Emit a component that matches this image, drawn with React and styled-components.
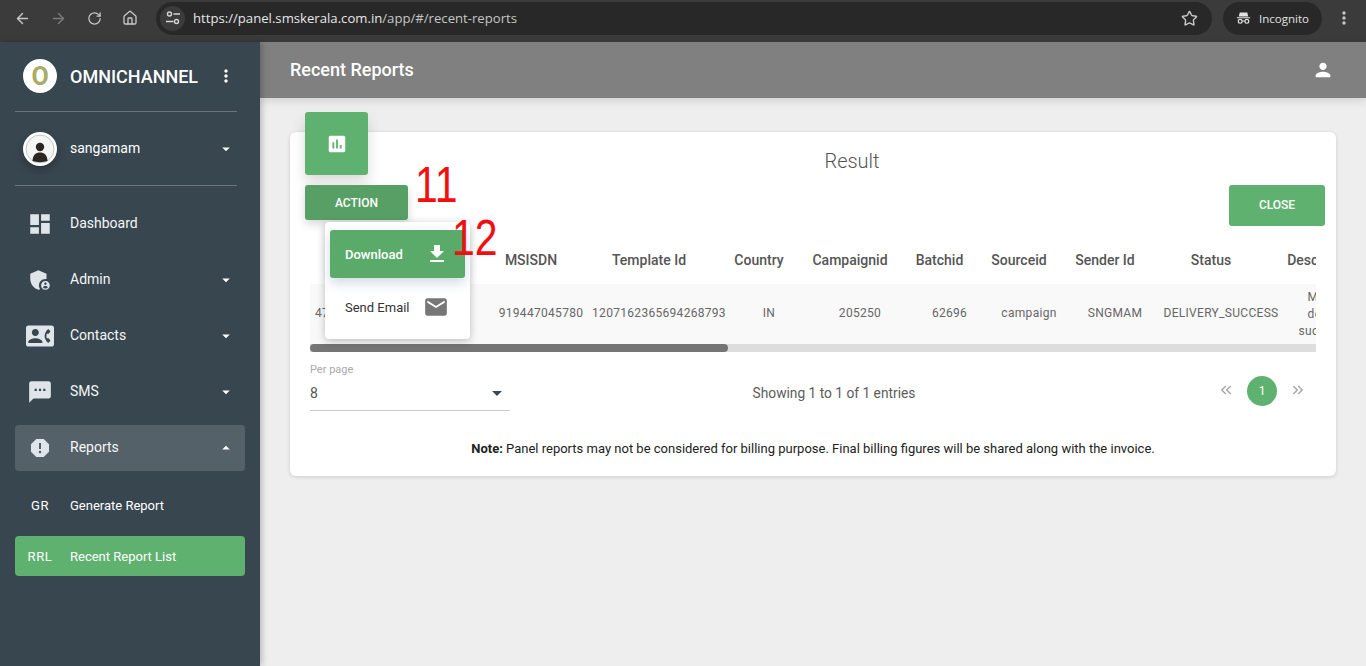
import React from "react";
import styled, { createGlobalStyle } from "styled-components";
import { ArrowLeft, ArrowRight, RotateCw, Home, Star } from "lucide-react";
import {
  MdDashboard, MdAdminPanelSettings, MdContactPhone, MdSms, MdReport,
  MdGetApp, MdEmail, MdPerson, MdAssessment, MdArrowDropDown, MdArrowDropUp,
  MdMoreVert, MdKeyboardDoubleArrowLeft, MdKeyboardDoubleArrowRight,
} from "react-icons/md";

const Global = createGlobalStyle`
  html, body { margin: 0; padding: 0; height: 100%; overflow: hidden; background: #eee; }
  body { font-family: Roboto, "Liberation Sans", sans-serif; }
  * { box-sizing: border-box; }
`;

const Page = styled.div`
  position: relative;
  display: flex;
  flex-direction: column;
  width: 1366px;
  height: 666px;
  overflow: hidden;
`;

/* browser chrome */
const Chrome = styled.div`
  flex: 0 0 42px;
  display: flex;
  align-items: center;
  height: 42px;
  padding: 0 0 6px 0;
  background: #3b3b3b;
  color: #c7c7c7;
`;
const NavIcon = styled.span`
  display: flex;
  justify-content: center;
  width: 36px;
  color: ${(p) => (p.$dim ? "#7a7a7a" : "#c7c7c7")};
`;
const NavIcons = styled.div`
  display: flex;
  align-items: center;
  padding-left: 4px;
  width: 156px;
`;
const Omnibox = styled.div`
  display: flex;
  align-items: center;
  width: 1056px;
  height: 33px;
  padding: 0 14px 0 4px;
  border-radius: 17px;
  background: #282828;
`;
const SiteIcon = styled.span`
  display: flex;
  align-items: center;
  justify-content: center;
  width: 25px;
  height: 25px;
  border-radius: 50%;
  background: #3b3b3b;
`;
const Url = styled.span`
  flex: 1;
  margin-left: 8px;
  font-family: "Open Sans", sans-serif;
  font-size: 13.15px;
  color: #c4c7c5;
  b { font-weight: 400; color: #e6e6e6; }
`;
const IncognitoPill = styled.div`
  display: flex;
  align-items: center;
  gap: 8px;
  width: 99px;
  height: 33px;
  margin-left: 11px;
  padding-left: 13px;
  border-radius: 17px;
  background: #282828;
  font-family: "Open Sans", sans-serif;
  font-size: 11.5px;
  color: #e3e3e3;
`;
const ChromeMenu = styled.span`
  display: flex;
  justify-content: center;
  width: 44px;
`;

const Body = styled.div`
  flex: 1;
  display: flex;
  min-height: 0;
`;

/* sidebar */
const Sidebar = styled.aside`
  flex: 0 0 260px;
  display: flex;
  flex-direction: column;
  background: #37464f;
  color: #fff;
  box-shadow: 2px 0 6px rgba(0, 0, 0, 0.22);
  z-index: 3;
`;
const Brand = styled.div`
  display: flex;
  align-items: center;
  margin: 0 23px 0 15px;
  padding: 17px 0 18px 8px;
  border-bottom: 1px solid rgba(255, 255, 255, 0.25);
  box-sizing: content-box;
  height: 34px;
`;
const LogoCircle = styled.div`
  display: flex;
  align-items: center;
  justify-content: center;
  width: 34px;
  height: 34px;
  border-radius: 50%;
  background: #fff;
  color: #a9ac63;
  font-size: 25px;
  font-weight: 700;
`;
const BrandName = styled.span`
  margin-left: 13px;
  width: 146px;
  font-size: 18px;
  font-weight: 500;
`;
const UserRow = styled.div`
  display: flex;
  align-items: center;
  margin: 0 23px 0 15px;
  padding: 20px 0 19px 8px;
  border-bottom: 1px solid rgba(255, 255, 255, 0.25);
  box-sizing: content-box;
  height: 34px;
`;
const Avatar = styled.div`
  width: 34px;
  height: 34px;
  border-radius: 50%;
  background: #fff;
  box-shadow: 0 4px 8px rgba(0, 0, 0, 0.25);
  overflow: hidden;
`;
const UserName = styled.span`
  flex: 1;
  margin-left: 13px;
  margin-top: -3px;
  font-size: 14px;
`;
const UserCaret = styled.span`
  display: flex;
  width: 18px;
  margin-right: 2px;
  color: #fff;
`;
const Nav = styled.nav`
  display: flex;
  flex-direction: column;
  gap: 10px;
  padding: 15px 15px 0;
`;
const NavItem = styled.div`
  display: flex;
  align-items: center;
  height: 46px;
  border-radius: 4px;
  background: ${(p) => (p.$open ? "rgba(255,255,255,0.15)" : "transparent")};
`;
const NavGlyph = styled.span`
  display: flex;
  align-items: center;
  justify-content: center;
  flex: 0 0 50px;
  color: #dfe5e9;
`;
const NavLabel = styled.span`
  flex: 1;
  margin: -2px 0 0 5px;
  font-size: 14px;
  color: #f4f6f7;
`;
const Caret = styled.span`
  display: flex;
  width: 18px;
  margin-right: 10px;
  color: #fff;
`;
const SubNav = styled.div`
  display: flex;
  flex-direction: column;
  gap: 11px;
  margin-top: 4px;
`;
const SubItem = styled.div`
  display: flex;
  align-items: center;
  height: 40px;
  border-radius: 4px;
  font-size: 13px;
  color: #fff;
  background: ${(p) => (p.$active ? "#5fb170" : "transparent")};
`;
const SubCode = styled.span`
  flex: 0 0 50px;
  text-align: center;
  letter-spacing: 0.6px;
`;
const SubLabel = styled.span`
  margin-left: 5px;
`;

/* main */
const Main = styled.main`
  flex: 1;
  display: flex;
  flex-direction: column;
  min-width: 0;
`;
const TopBar = styled.header`
  display: flex;
  align-items: center;
  justify-content: space-between;
  height: 56px;
  padding: 0 32px 0 30px;
  background: #808080;
  box-shadow: 0 3px 8px rgba(0, 0, 0, 0.12);
  color: #fff;
  font-size: 18px;
  font-weight: 500;
  z-index: 2;
`;
const TopTitle = styled.div`
  margin-top: -1px;
`;
const Content = styled.div`
  flex: 1;
  padding: 34px 30px 0;
  background: #eee;
`;
const Card = styled.section`
  position: relative;
  height: 344px;
  padding-top: 15px;
  background: #fff;
  border-radius: 6px;
  box-shadow: 0 1px 4px rgba(0, 0, 0, 0.14);
`;
const CardBadge = styled.div`
  position: absolute;
  left: 15px;
  top: -20px;
  display: flex;
  align-items: center;
  justify-content: center;
  width: 63px;
  height: 63px;
  border-radius: 3px;
  background: #5fb170;
  color: #fff;
  box-shadow: 0 8px 14px rgba(0, 0, 0, 0.14);
`;
const CardTitle = styled.h2`
  margin: 0;
  height: 28px;
  padding-left: 78px;
  line-height: 28px;
  text-align: center;
  font-size: 20px;
  font-weight: 300;
  color: #555;
`;
const Toolbar = styled.div`
  display: flex;
  align-items: flex-start;
  justify-content: space-between;
  height: 41px;
  margin: 10px 11px 0 15px;
`;
const ActionWrap = styled.div`
  position: relative;
`;
const ActionButton = styled.button`
  display: block;
  width: 103px;
  height: 35px;
  border: 0;
  border-radius: 3px;
  background: #579f65;
  color: #fff;
  font: 500 12px Roboto, sans-serif;
  box-shadow: 0 4px 10px rgba(0, 0, 0, 0.16);
`;
const CloseButton = styled.button`
  width: 96px;
  height: 41px;
  padding: 0 0 2px;
  border: 0;
  border-radius: 3px;
  background: #5fb170;
  color: #fff;
  font: 500 12px Roboto, sans-serif;
`;
const Menu = styled.div`
  position: absolute;
  left: 20px;
  top: 37px;
  display: flex;
  flex-direction: column;
  gap: 5px;
  width: 145px;
  height: 117px;
  padding: 8px 5px;
  border-radius: 4px;
  background: #fff;
  box-shadow: 0 2px 8px rgba(0, 0, 0, 0.25);
  z-index: 5;
`;
const MenuItem = styled.div`
  flex: 0 0 48px;
  display: flex;
  align-items: center;
  justify-content: space-between;
  padding: 0 15px;
  border-radius: 3px;
  font-size: 13px;
  font-weight: ${(p) => (p.$active ? 500 : 400)};
  color: ${(p) => (p.$active ? "#fff" : "#333")};
  background: ${(p) => (p.$active ? "#5aab6a" : "transparent")};
  box-shadow: ${(p) => (p.$active ? "0 5px 12px rgba(80,110,160,0.25)" : "none")};
  svg { color: ${(p) => (p.$active ? "#fff" : "#777")}; margin-right: 1px; }
`;
const TableWrap = styled.div`
  margin: 12px 20px 0;
  overflow: hidden;
`;
const Table = styled.table`
  width: 1072.5px;
  table-layout: fixed;
  border-collapse: collapse;
`;
const Th = styled.th`
  height: 46px;
  padding: 0 20px 2px 0;
  font-size: 14px;
  font-weight: 500;
  text-align: center;
  white-space: nowrap;
  color: #555;
`;
const Td = styled.td`
  height: 60px;
  padding: ${(p) => (p.$first ? "0 0 2px 5px" : p.$wrap ? "0 15px" : "0 0 2px")};
  font-size: 12px;
  letter-spacing: 0.3px;
  line-height: 17px;
  text-align: ${(p) => (p.$first ? "left" : "center")};
  white-space: ${(p) => (p.$wrap ? "normal" : "nowrap")};
  color: #666;
  background: #f9f9f9;
`;
const Track = styled.div`
  height: 8px;
  margin: 0 20px;
  background: #ddd;
`;
const Thumb = styled.div`
  width: 418px;
  height: 8px;
  border-radius: 4px;
  background: #757575;
`;
const Footer = styled.div`
  display: grid;
  grid-template-columns: 200px 1fr 158px;
  margin: 10px 20px 0;
  height: 49px;
`;
const PerPage = styled.div`
  display: flex;
  flex-direction: column;
  border-bottom: 1px solid #ccc;
`;
const PerLabel = styled.span`
  padding-top: 1px;
  font-size: 11px;
  line-height: 14px;
  color: #aaa;
`;
const PerValue = styled.div`
  display: flex;
  align-items: center;
  justify-content: space-between;
  height: 33px;
  padding-bottom: 1px;
  font-size: 14px;
  color: #555;
  svg { color: #3c4850; margin-right: 1px; }
`;
const Showing = styled.div`
  padding-top: 22px;
  text-align: center;
  font-size: 13.75px;
  line-height: 18px;
  color: #5c5c5c;
`;
const Pager = styled.div`
  display: flex;
  align-items: flex-start;
  justify-content: flex-end;
  gap: 12px;
  padding: 14px 9px 0 0;
  color: #aaa;
`;
const PagerArrow = styled.span`
  display: flex;
  margin-top: 5px;
`;
const PageDot = styled.span`
  display: flex;
  align-items: center;
  justify-content: center;
  width: 30px;
  height: 30px;
  border-radius: 50%;
  background: #5fb170;
  color: #fff;
  font-size: 12px;
`;
const Note = styled.p`
  margin: 29px 0 0;
  text-align: center;
  font-size: 13px;
  line-height: 18px;
  color: #222;
`;
const Mark = styled.span`
  position: absolute;
  left: ${(p) => p.$x}px;
  top: ${(p) => p.$y}px;
  font-family: "Liberation Sans", Arial, sans-serif;
  font-size: 50px;
  line-height: 50px;
  color: #f01010;
  transform: scaleX(0.82);
  transform-origin: left top;
  z-index: 9;
`;

const cols = [184.5, 93, 143, 77, 105, 74, 85, 87, 125, 99];
const heads = ["", "MSISDN", "Template Id", "Country", "Campaignid", "Batchid", "Sourceid", "Sender Id", "Status", "Description"];
const cells = ["47", "919447045780", "1207162365694268793", "IN", "205250", "62696", "campaign", "SNGMAM", "DELIVERY_SUCCESS", "Message delivered successfully"];

const Tune = () => (
  <svg width="16" height="16" viewBox="0 0 16 16" fill="none" stroke="#d5d5d5" strokeWidth="1.4">
    <circle cx="4.5" cy="4" r="2" />
    <path d="M8.5 4H15M1 11.5h7.5" />
    <circle cx="11.5" cy="11.5" r="2" />
  </svg>
);
const Incognito = () => (
  <svg width="15" height="14" viewBox="0 0 18 16" fill="none">
    <path d="M4.5 1.5h9l1.2 4.7H3.3z M1 7h16v1.3H1z" fill="#e3e3e3" />
    <circle cx="5" cy="12" r="2.3" stroke="#e3e3e3" strokeWidth="1.4" />
    <circle cx="13" cy="12" r="2.3" stroke="#e3e3e3" strokeWidth="1.4" />
    <path d="M7.3 11.6h3.4" stroke="#e3e3e3" strokeWidth="1.2" />
  </svg>
);
const UserPic = () => (
  <svg width="34" height="34" viewBox="0 0 34 34">
    <circle cx="17" cy="17" r="14" fill="#f4f4f4" stroke="#bbb" strokeWidth="0.8" />
    <circle cx="17" cy="15" r="4.2" fill="#2a2723" />
    <path d="M9.5 29c0-6 3.5-8.5 7.5-8.5s7.5 2.5 7.5 8.5c-4 1.5-11 1.5-15 0z" fill="#2a2723" />
  </svg>
);

const navs = [
  [MdDashboard, "Dashboard", false, 26],
  [MdAdminPanelSettings, "Admin", true, 26],
  [MdContactPhone, "Contacts", true, 28],
  [MdSms, "SMS", true, 26],
];

export default function App() {
  return (
    <Page>
      <Global />
      <Chrome>
        <NavIcons>
          <NavIcon><ArrowLeft size={17} /></NavIcon>
          <NavIcon $dim><ArrowRight size={17} /></NavIcon>
          <NavIcon><RotateCw size={15} /></NavIcon>
          <NavIcon><Home size={16} /></NavIcon>
        </NavIcons>
        <Omnibox>
          <SiteIcon><Tune /></SiteIcon>
          <Url><b>https://panel.smskerala.com.in</b>/app/#/recent-reports</Url>
          <Star size={17} />
        </Omnibox>
        <IncognitoPill><Incognito />Incognito</IncognitoPill>
        <ChromeMenu><MdMoreVert size={20} /></ChromeMenu>
      </Chrome>
      <Body>
        <Sidebar>
          <Brand>
            <LogoCircle>O</LogoCircle>
            <BrandName>OMNICHANNEL</BrandName>
            <MdMoreVert size={20} />
          </Brand>
          <UserRow>
            <Avatar><UserPic /></Avatar>
            <UserName>sangamam</UserName>
            <UserCaret><MdArrowDropDown size={20} /></UserCaret>
          </UserRow>
          <Nav>
            {navs.map(([Icon, label, caret, size]) => (
              <NavItem key={label}>
                <NavGlyph><Icon size={size} /></NavGlyph>
                <NavLabel>{label}</NavLabel>
                {caret && <Caret><MdArrowDropDown size={20} /></Caret>}
              </NavItem>
            ))}
            <NavItem $open>
              <NavGlyph><MdReport size={24} /></NavGlyph>
              <NavLabel>Reports</NavLabel>
              <Caret><MdArrowDropUp size={20} /></Caret>
            </NavItem>
            <SubNav>
              <SubItem><SubCode>GR</SubCode><SubLabel>Generate Report</SubLabel></SubItem>
              <SubItem $active><SubCode>RRL</SubCode><SubLabel>Recent Report List</SubLabel></SubItem>
            </SubNav>
          </Nav>
        </Sidebar>
        <Main>
          <TopBar>
            <TopTitle>Recent Reports</TopTitle>
            <MdPerson size={22} />
          </TopBar>
          <Content>
            <Card>
              <CardBadge><MdAssessment size={22} /></CardBadge>
              <CardTitle>Result</CardTitle>
              <Toolbar>
                <ActionWrap>
                  <ActionButton>ACTION</ActionButton>
                  <Menu>
                    <MenuItem $active>Download<MdGetApp size={24} /></MenuItem>
                    <MenuItem>Send Email<MdEmail size={26} /></MenuItem>
                  </Menu>
                </ActionWrap>
                <CloseButton>CLOSE</CloseButton>
              </Toolbar>
              <TableWrap>
                <Table>
                  <colgroup>
                    {cols.map((w, i) => <col key={i} width={w} />)}
                  </colgroup>
                  <thead>
                    <tr>{heads.map((h, i) => <Th key={i}>{h}</Th>)}</tr>
                  </thead>
                  <tbody>
                    <tr>
                      {cells.map((c, i) => (
                        <Td key={i} $first={i === 0} $wrap={i === 9}>{c}</Td>
                      ))}
                    </tr>
                  </tbody>
                </Table>
              </TableWrap>
              <Track><Thumb /></Track>
              <Footer>
                <PerPage>
                  <PerLabel>Per page</PerLabel>
                  <PerValue>8<MdArrowDropDown size={24} /></PerValue>
                </PerPage>
                <Showing>Showing 1 to 1 of 1 entries</Showing>
                <Pager>
                  <PagerArrow><MdKeyboardDoubleArrowLeft size={18} /></PagerArrow>
                  <PageDot>1</PageDot>
                  <PagerArrow><MdKeyboardDoubleArrowRight size={18} /></PagerArrow>
                </Pager>
              </Footer>
              <Note><b>Note:</b> Panel reports may not be considered for billing purpose. Final billing figures will be shared along with the invoice.</Note>
            </Card>
          </Content>
        </Main>
      </Body>
      <Mark $x={415} $y={160}>11</Mark>
      <Mark $x={452} $y={213}>12</Mark>
    </Page>
  );
}
